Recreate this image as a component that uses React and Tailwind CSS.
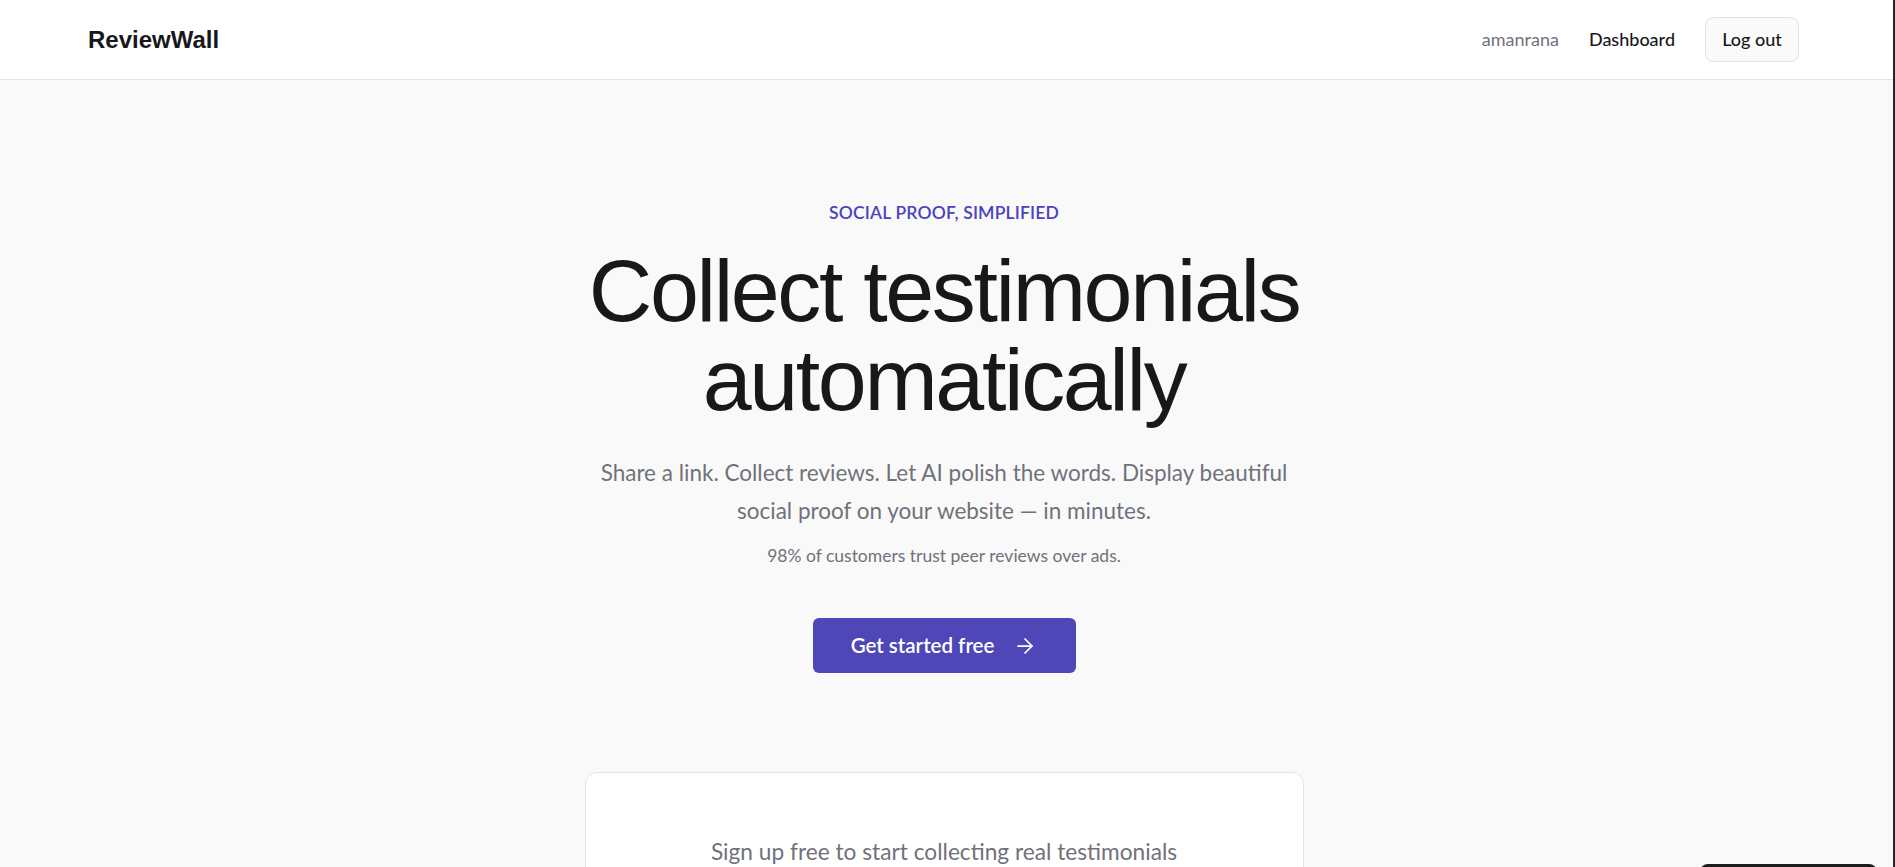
import React from "react";
import { ArrowRight } from "lucide-react";

const body = "font-['Lato','Noto_Sans',sans-serif]";
const display = "font-['Liberation_Sans','Arial',sans-serif]";

export default function App() {
  return (
    <div className="h-[867px] overflow-hidden flex bg-[#f9f9f9]">
      <div className="flex-1 flex flex-col min-w-0">
        {/* Header */}
        <header className="h-[80px] shrink-0 bg-white border-b border-[#e4e4e7] flex items-center justify-between pl-[88px] pr-[94px]">
          <div className={`${display} text-[24px] font-bold text-[#18181b]`}>
            ReviewWall
          </div>
          <nav className={`${body} flex items-center gap-[30px] text-[18px]`}>
            <span className="text-[#71717a]">amanrana</span>
            <a className="text-[#18181b] font-medium">Dashboard</a>
            <button className="h-[45px] w-[94px] rounded-lg border border-[#e4e4e7] bg-[#fafafa] text-[#18181b] font-medium">
              Log out
            </button>
          </nav>
        </header>

        {/* Hero */}
        <main className="flex flex-col items-center pt-[121px] pr-[5px] text-center">
          <p className={`${body} text-[17.5px] leading-[24px] font-semibold uppercase tracking-[0.01em] text-[#4a42c0]`}>
            Social proof, simplified
          </p>
          <h1 className={`${display} mt-[21px] text-[88px] leading-[89px] font-normal tracking-[-0.027em] text-[#18181b]`}>
            Collect testimonials
            <br />
            automatically
          </h1>
          <p className={`${body} mt-[30px] text-[22.5px] leading-[38px] text-[#71717a]`}>
            Share a link. Collect reviews. Let AI polish the words. Display beautiful
            <br />
            social proof on your website — in minutes.
          </p>
          <p className={`${body} mt-[14px] text-[17.5px] leading-[24px] text-[#71717a]`}>
            98% of customers trust peer reviews over ads.
          </p>
          <button className={`${body} mt-[50px] w-[263px] h-[55px] rounded-md bg-[#4f46b8] text-white flex items-center justify-center gap-[19px]`}>
            <span className="text-[20.5px] font-semibold">Get started free</span>
            <ArrowRight size={24} strokeWidth={1.75} />
          </button>

          {/* Sign up card */}
          <section className="mt-[99px] w-[719px] h-[400px] shrink-0 rounded-xl border border-[#e4e4e7] bg-white pt-[60px]">
            <p className={`${body} text-[22.7px] leading-[38px] text-[#71717a]`}>
              Sign up free to start collecting real testimonials
            </p>
          </section>
        </main>
      </div>
      <div className="w-[2px] shrink-0 bg-[#262626]" />

      {/* floating toast peeking from the bottom edge */}
      <div className="fixed top-[864px] right-[18px] w-[177px] h-[44px] rounded-lg bg-[#1c1c1c]" />
    </div>
  );
}
